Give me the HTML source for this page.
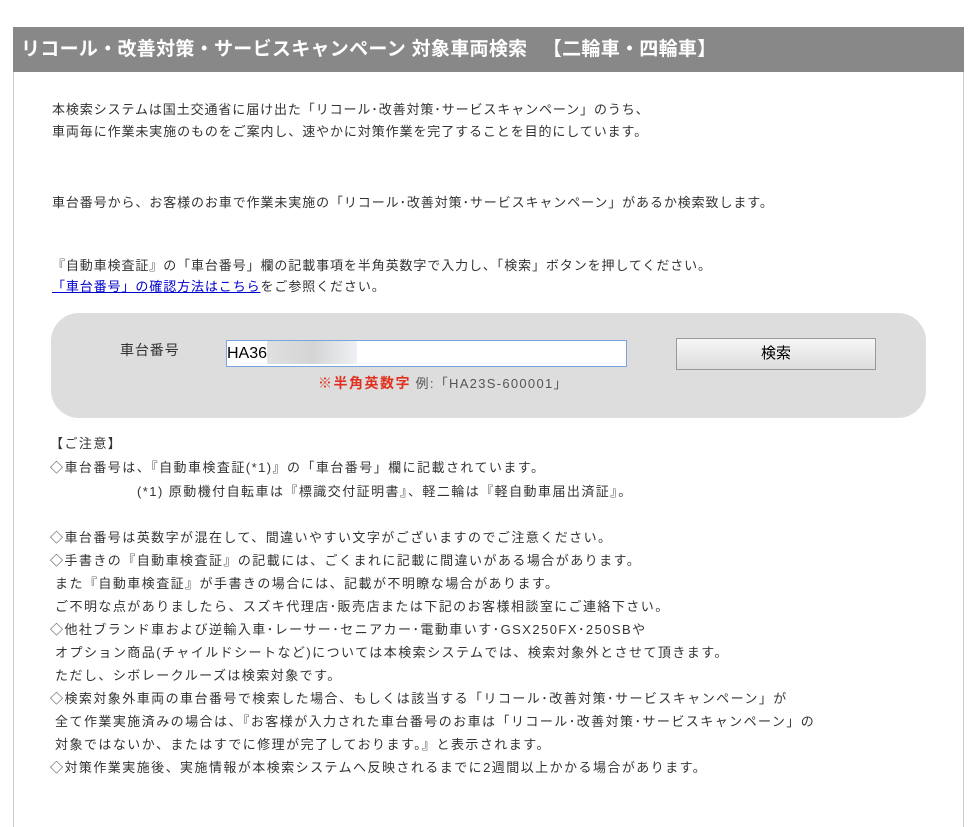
<!DOCTYPE html><html><head><meta charset="utf-8"><style>
body{margin:0;background:#fff;font-family:"Liberation Sans","Noto Sans CJK JP",sans-serif;color:#333;}
.wrap{position:absolute;left:13px;top:27px;width:949px;height:800px;border-left:1px solid #ccc;border-right:1px solid #ccc;}
.hd{position:absolute;left:13px;top:27px;width:951px;height:45px;background:#888;color:#fff;font-size:19px;font-weight:bold;line-height:45px;letter-spacing:0.3px}
.hd span{padding-left:8px}
.t{position:absolute;left:52px;font-size:13px;letter-spacing:0.9px;white-space:nowrap;line-height:16px}
a{color:#00c;text-decoration:underline}
.box{position:absolute;left:51px;top:313px;width:875px;height:105px;background:#ddd;border-radius:28px}
.inp{position:absolute;left:226px;top:340px;width:399px;height:25px;border:1px solid #7aa3e0;background:#fff;font-size:16px;line-height:25px;color:#000}
.btn{position:absolute;left:676px;top:338px;width:198px;height:30px;border:1px solid #999;background:linear-gradient(#f6f6f6,#ddd);font-size:15px;text-align:center;line-height:30px;color:#000}
.n{position:absolute;left:50px;font-size:13px;letter-spacing:1.45px;white-space:nowrap;line-height:16px}
</style></head><body>
<div class="wrap"></div>
<div class="hd"><span>リコール・改善対策・サービスキャンペーン 対象車両検索 　【二輪車・四輪車】</span></div>
<div class="t" style="top:102px">本検索システムは国土交通省に届け出た「リコール･改善対策･サービスキャンペーン」のうち、</div>
<div class="t" style="top:124px">車両毎に作業未実施のものをご案内し、速やかに対策作業を完了することを目的にしています。</div>
<div class="t" style="top:195px">車台番号から、お客様のお車で作業未実施の「リコール･改善対策･サービスキャンペーン」があるか検索致します。</div>
<div class="t" style="top:258px">『自動車検査証』の「車台番号」欄の記載事項を半角英数字で入力し、「検索」ボタンを押してください。</div>
<div class="t" style="top:279px"><a>「車台番号」の確認方法はこちら</a>をご参照ください。</div>
<div class="box"></div>
<div class="t" style="left:120px;top:342px;font-size:14px">車台番号</div>
<div class="inp">HA36<span style="display:inline-block;width:90px;height:23px;vertical-align:top;background:linear-gradient(90deg,#e0e0e0,#d4d4d4,#eef0f4)"></span></div>
<div class="btn">検索</div>
<div class="t" style="left:318px;top:375px"><b style="color:#e0301e;font-size:14px;letter-spacing:1.5px">※半角英数字</b> <span style="color:#555;font-size:13px;letter-spacing:1.3px">例:「HA23S-600001」</span></div>
<div class="n" style="top:436px">【ご注意】</div>
<div class="n" style="top:460px">◇車台番号は、『自動車検査証(*1)』の「車台番号」欄に記載されています。</div>
<div class="n" style="top:484px;left:137px">(*1) 原動機付自転車は『標識交付証明書』、軽二輪は『軽自動車届出済証』。</div>
<div class="n" style="top:530px">◇車台番号は英数字が混在して、間違いやすい文字がございますのでご注意ください。</div>
<div class="n" style="top:553px">◇手書きの『自動車検査証』の記載には、ごくまれに記載に間違いがある場合があります。</div>
<div class="n" style="top:576px">&nbsp;また『自動車検査証』が手書きの場合には、記載が不明瞭な場合があります。</div>
<div class="n" style="top:599px">&nbsp;ご不明な点がありましたら、スズキ代理店･販売店または下記のお客様相談室にご連絡下さい。</div>
<div class="n" style="top:622px">◇他社ブランド車および逆輸入車･レーサー･セニアカー･電動車いす･GSX250FX･250SBや</div>
<div class="n" style="top:645px">&nbsp;オプション商品(チャイルドシートなど)については本検索システムでは、検索対象外とさせて頂きます。</div>
<div class="n" style="top:668px">&nbsp;ただし、シボレークルーズは検索対象です。</div>
<div class="n" style="top:691px">◇検索対象外車両の車台番号で検索した場合、もしくは該当する「リコール･改善対策･サービスキャンペーン」が</div>
<div class="n" style="top:714px">&nbsp;全て作業実施済みの場合は、『お客様が入力された車台番号のお車は「リコール･改善対策･サービスキャンペーン」の</div>
<div class="n" style="top:737px">&nbsp;対象ではないか、またはすでに修理が完了しております。』と表示されます。</div>
<div class="n" style="top:760px">◇対策作業実施後、実施情報が本検索システムへ反映されるまでに2週間以上かかる場合があります。</div>
</body></html>
